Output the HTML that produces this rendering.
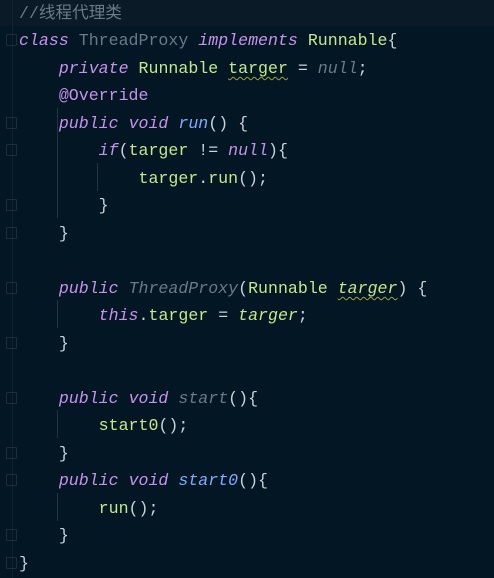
<!DOCTYPE html>
<html><head><style>
body{margin:0;background:#021624;width:494px;height:578px;overflow:hidden;position:relative;font-family:"Liberation Mono","Noto Sans CJK SC",monospace;font-size:16.6px;}
.top{position:absolute;left:0;top:0;width:494px;height:26px;background:#0a1b27;}
.l{position:absolute;left:19px;white-space:pre;color:#c8d3da;line-height:20px;}
.k{color:#c792ea;font-style:italic}
.a{color:#c792ea}
.g{color:#c3e88d}
.gi{color:#c3e88d;font-style:italic}
.c{color:#6a7a86}
.ci{color:#6a7a86;font-style:italic}
.f{color:#82aaff;font-style:italic}
.u{text-decoration:underline wavy #9aa63c;text-decoration-thickness:1px;text-underline-offset:3px}
.guide{position:absolute;width:1px;background:#26343f}
.fold{position:absolute;left:6px;width:9px;height:10px;border:1px solid #1f2d39;border-radius:1px}
</style></head><body>
<div class="top"></div>
<div class="guide" style="left:12px;top:0;height:578px;background:#13222e"></div>
<div class="guide" style="left:57px;top:108px;height:110px"></div>
<div class="guide" style="left:97px;top:163px;height:28px"></div>
<div class="guide" style="left:57px;top:300px;height:28px"></div>
<div class="guide" style="left:57px;top:410px;height:28px"></div>
<div class="guide" style="left:57px;top:493px;height:28px"></div>
<div class="fold" style="top:34px"></div>
<div class="fold" style="top:117px"></div>
<div class="fold" style="top:144px"></div>
<div class="fold" style="top:199px"></div>
<div class="fold" style="top:227px"></div>
<div class="fold" style="top:282px"></div>
<div class="fold" style="top:337px"></div>
<div class="fold" style="top:392px"></div>
<div class="fold" style="top:447px"></div>
<div class="fold" style="top:474px"></div>
<div class="fold" style="top:529px"></div>
<div class="fold" style="top:557px"></div>
<div class="l" style="top:4px"><span class="c">//线程代理类</span></div>
<div class="l" style="top:31px"><span class="k">class</span> <span class="c">ThreadProxy</span> <span class="k">implements</span> <span class="g">Runnable</span>{</div>
<div class="l" style="top:59px">    <span class="k">private</span> <span class="g">Runnable</span> <span class="g u">targer</span> = <span class="ci">null</span>;</div>
<div class="l" style="top:86px">    <span class="a">@Override</span></div>
<div class="l" style="top:114px">    <span class="k">public</span> <span class="k">void</span> <span class="f">run</span>() {</div>
<div class="l" style="top:141px">        <span class="k">if</span>(<span class="g">targer</span> != <span class="k">null</span>){</div>
<div class="l" style="top:169px">            <span class="g">targer</span>.<span class="g">run</span>();</div>
<div class="l" style="top:196px">        }</div>
<div class="l" style="top:224px">    }</div>
<div class="l" style="top:279px">    <span class="k">public</span> <span class="ci">ThreadProxy</span>(<span class="g">Runnable</span> <span class="gi u">targer</span>) {</div>
<div class="l" style="top:306px">        <span class="k">this</span>.<span class="g">targer</span> = <span class="gi">targer</span>;</div>
<div class="l" style="top:334px">    }</div>
<div class="l" style="top:389px">    <span class="k">public</span> <span class="k">void</span> <span class="ci">start</span>(){</div>
<div class="l" style="top:416px">        <span class="g">start0</span>();</div>
<div class="l" style="top:444px">    }</div>
<div class="l" style="top:471px">    <span class="k">public</span> <span class="k">void</span> <span class="f">start0</span>(){</div>
<div class="l" style="top:499px">        <span class="g">run</span>();</div>
<div class="l" style="top:526px">    }</div>
<div class="l" style="top:554px">}</div>
</body></html>
